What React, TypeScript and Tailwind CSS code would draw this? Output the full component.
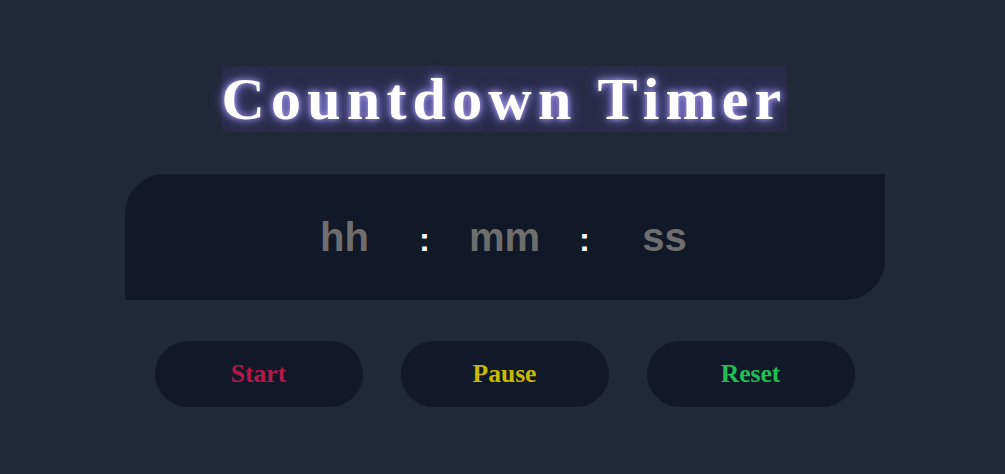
import React from "react";

export default function App() {
  const sans = { fontFamily: '"Liberation Sans", Arial, sans-serif' };
  return (
    <div className="min-h-[474px] w-full bg-[#1f2937] flex flex-col items-center pl-[4px]">
      <h1
        className="mt-[66px] h-[66px] inline-block bg-[#282b47] text-white font-bold text-[60px] leading-[66px] tracking-[6.2px] [text-shadow:0_0_6px_#b9b0ff,0_0_14px_#7c6fe0]"
        style={{ fontFamily: '"Liberation Serif", "Times New Roman", serif' }}
      >
        Countdown Timer
      </h1>
      <div className="mt-[42px] w-[760px] h-[126px] bg-[#111827] rounded-tl-[40px] rounded-br-[40px] flex items-center justify-center" style={sans}>
        <div className="flex items-baseline gap-[20px]">
          <input
            placeholder="hh"
            className="w-[100px] bg-transparent text-center text-[40px] font-bold outline-none placeholder:text-[#6e6e6e] text-[#6e6e6e]"
            style={sans}
          />
          <span className="w-[20px] text-center text-white font-bold text-[33px]">:</span>
          <input
            placeholder="mm"
            className="w-[100px] bg-transparent text-center text-[40px] font-bold outline-none placeholder:text-[#6e6e6e] text-[#6e6e6e]"
            style={sans}
          />
          <span className="w-[20px] text-center text-white font-bold text-[33px]">:</span>
          <input
            placeholder="ss"
            className="w-[100px] bg-transparent text-center text-[40px] font-bold outline-none placeholder:text-[#6e6e6e] text-[#6e6e6e]"
            style={sans}
          />
        </div>
      </div>
      <div
        className="mt-[41px] flex gap-[38px]"
        style={{ fontFamily: '"Liberation Serif", "Times New Roman", serif' }}
      >
        <button className="w-[208px] h-[66px] rounded-full bg-[#111827] text-[25.6px] font-bold text-[#b4184a]">Start</button>
        <button className="w-[208px] h-[66px] rounded-full bg-[#111827] text-[25.6px] font-bold text-[#c9b800]">Pause</button>
        <button className="w-[208px] h-[66px] rounded-full bg-[#111827] text-[25.6px] font-bold text-[#1fbf55]">Reset</button>
      </div>
    </div>
  );
}
